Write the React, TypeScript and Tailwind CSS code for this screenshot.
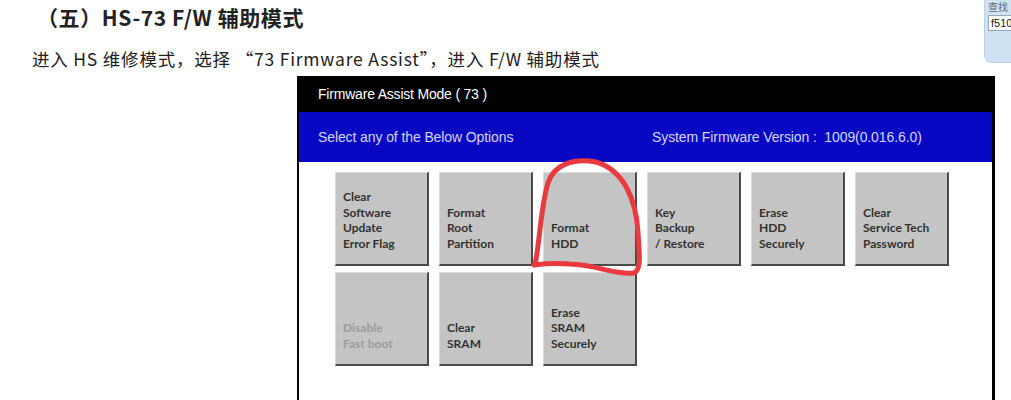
const rows = [
  [
    { lines: ['Clear', 'Software', 'Update', 'Error Flag'] },
    { lines: ['Format', 'Root', 'Partition'] },
    { lines: ['Format', 'HDD'] },
    { lines: ['Key', 'Backup', '/ Restore'] },
    { lines: ['Erase', 'HDD', 'Securely'] },
    { lines: ['Clear', 'Service Tech', 'Password'] },
  ],
  [
    { lines: ['Disable', 'Fast boot'], disabled: true },
    { lines: ['Clear', 'SRAM'] },
    { lines: ['Erase', 'SRAM', 'Securely'] },
  ],
]

function OptionButton({ lines, disabled }: { lines: string[]; disabled?: boolean }) {
  return (
    <div
      className={`h-[94px] w-[94px] bg-[#c4c4c4] border-t border-l border-[#dcdcdc] border-r-2 border-b-2 border-r-[#4a4a4a] border-b-[#4a4a4a] flex flex-col justify-end pl-[7px] pb-[13px] text-[12px] leading-[15.5px] font-bold ${
        disabled ? 'text-[#9c9c9c]' : 'text-[#333]'
      }`}
      style={{ fontFamily: 'Lato, "Liberation Sans", sans-serif' }}
    >
      {lines.map((l) => (
        <span key={l}>{l}</span>
      ))}
    </div>
  )
}

export default function App() {
  return (
    <div className="relative w-[1011px] h-[400px] overflow-hidden bg-white" style={{ fontFamily: '"Noto Sans CJK SC", "Noto Sans", sans-serif' }}>
      <h2 className="pl-[37px] text-[21px] leading-[34px] font-bold text-[#222] tracking-[0.6px]">
        （五）HS-73 F/W 辅助模式
      </h2>
      <p className="pl-[32px] mt-[13px] text-[17.5px] leading-[24px] text-[#222] tracking-[0.8px]">
        进入 HS 维修模式，选择 “73 Firmware Assist”，进入 F/W 辅助模式
      </p>

      <div className="relative ml-[297px] mt-[5px] w-[698px] h-[330px] border-l-2 border-r-[3px] border-black flex flex-col" style={{ fontFamily: '"Liberation Sans", Arial, sans-serif' }}>
        <div className="h-[36px] bg-black flex items-center pl-[19px] text-[14px] text-white tracking-[-0.2px]">
          Firmware Assist Mode ( 73 )
        </div>
        <div className="h-[50px] bg-[#0808c4] flex items-center pl-[19px] text-[14px] text-[#d4d4ff] tracking-[-0.1px]">
          <span className="w-[334px]">Select any of the Below Options</span>
          <span>System Firmware Version :&nbsp; 1009(0.016.6.0)</span>
        </div>
        <div className="flex-1 bg-white pl-[36px] pt-[10px] flex flex-col gap-[6px]">
          {rows.map((row, i) => (
            <div key={i} className="flex gap-[10px]">
              {row.map((b) => (
                <OptionButton key={b.lines.join('-')} lines={b.lines} disabled={b.disabled} />
              ))}
            </div>
          ))}
        </div>

        {/* red hand-drawn mark */}
        <svg className="absolute left-0 top-0 pointer-events-none" width="698" height="330" viewBox="297 76 698 330">
          <path
            d="M533,265 C538,240 539,205 546,183 C552,164 572,158 594,162 C622,170 634,200 636,232 C637,252 640,270 632,273 C612,275 596,265 568,264 C552,263 540,264 532,265"
            fill="none"
            stroke="#ea3a40"
            strokeWidth="5"
            strokeLinecap="round"
            strokeLinejoin="round"
          />
        </svg>
      </div>

      {/* find box at top right */}
      <div className="absolute left-[984px] top-0 w-[60px] h-[63px] bg-[#cfe2f3] rounded-bl-[8px] border-l border-b border-[#b9cfe3] pl-[3px]">
        <div className="text-[10px] leading-[13px] text-[#666]">查找</div>
        <div className="mt-[2px] w-[50px] h-[16px] bg-white border border-[#9aa9b8] text-[11px] leading-[14px] pl-[2px] text-[#222]" style={{ fontFamily: '"Liberation Sans", sans-serif' }}>
          f510
        </div>
      </div>
    </div>
  )
}
